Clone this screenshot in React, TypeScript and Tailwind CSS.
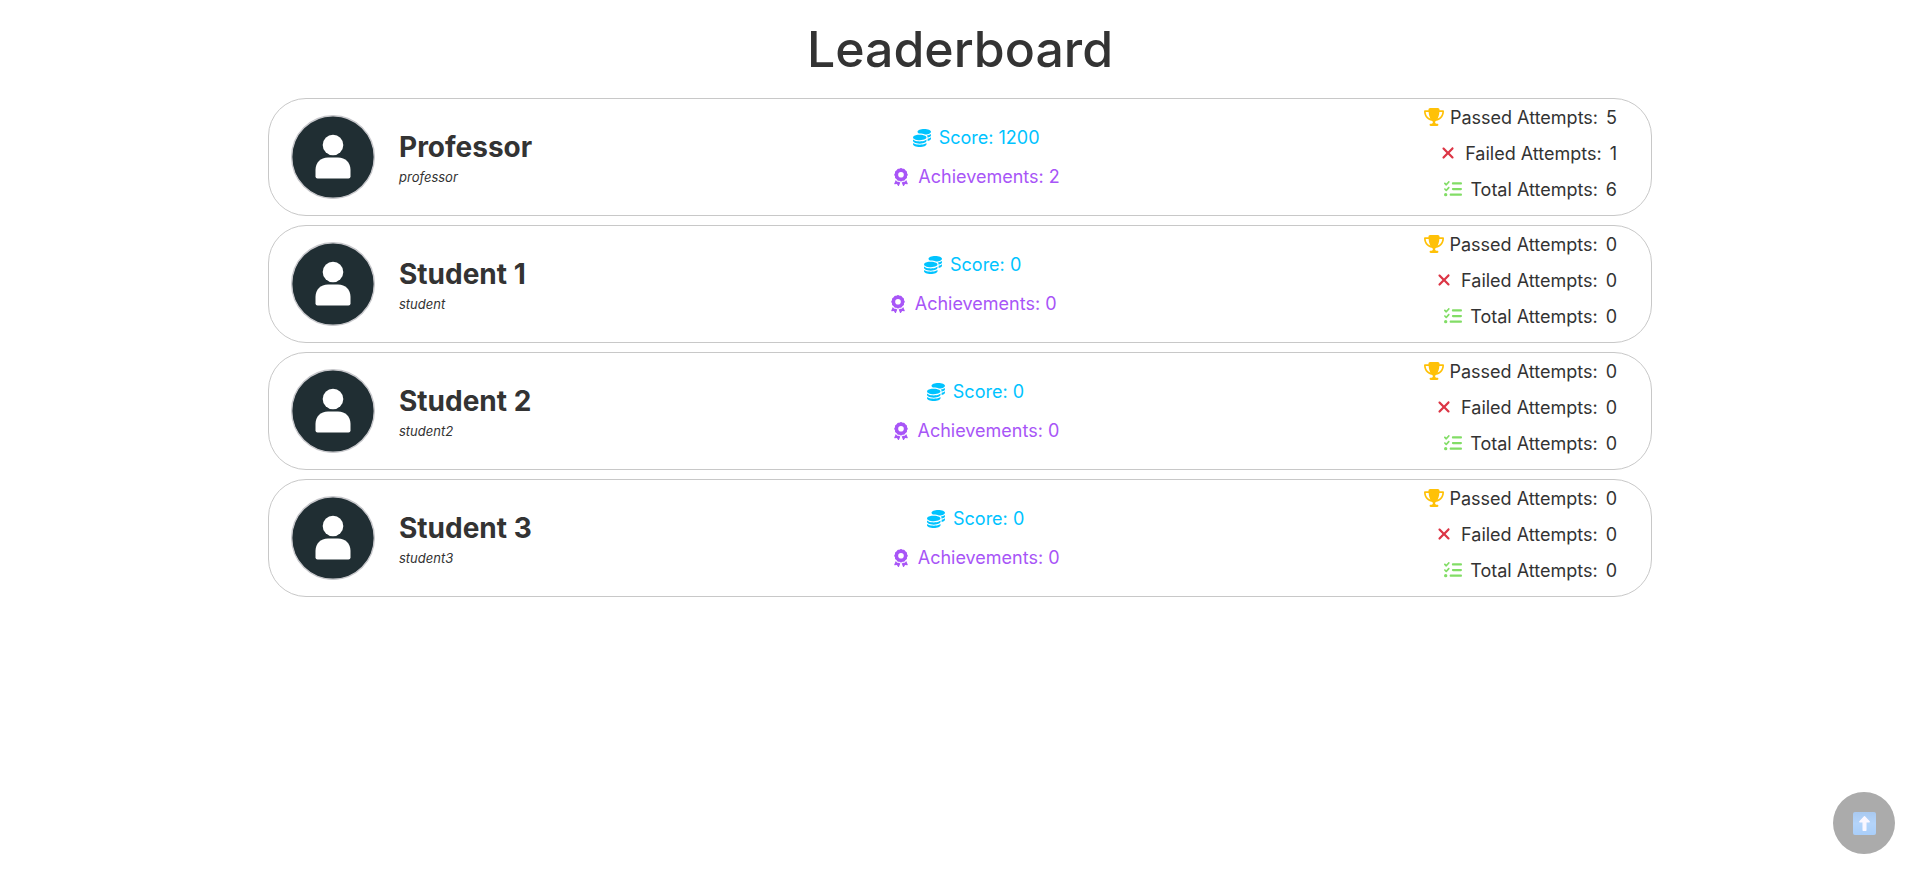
import { FaAward, FaCoins, FaListCheck, FaTrophy, FaXmark } from "react-icons/fa6";

type Player = {
  name: string;
  username: string;
  score: number;
  achievements: number;
  passed: number;
  failed: number;
  total: number;
};

const players: Player[] = [
  { name: "Professor", username: "professor", score: 1200, achievements: 2, passed: 5, failed: 1, total: 6 },
  { name: "Student 1", username: "student", score: 0, achievements: 0, passed: 0, failed: 0, total: 0 },
  { name: "Student 2", username: "student2", score: 0, achievements: 0, passed: 0, failed: 0, total: 0 },
  { name: "Student 3", username: "student3", score: 0, achievements: 0, passed: 0, failed: 0, total: 0 },
];

function Avatar() {
  return (
    <svg viewBox="0 0 84 84" className="size-21 shrink-0" aria-hidden="true">
      <circle cx="42" cy="42" r="41.3" fill="#202e33" stroke="#c8c8cc" strokeWidth="1.4" />
      <circle cx="42" cy="30" r="10.3" fill="#fff" />
      <path d="M24.500 55c0-7.500 5-12.500 12.500-12.500h10c7.500 0 12.500 5 12.500 12.500v6.500q0 2-2 2h-31q-2 0-2-2z" fill="#fff" />
    </svg>
  );
}

function PlayerCard({ player }: { player: Player }) {
  return (
    <li className="flex h-[118px] items-center justify-between rounded-[38px] border border-[#c8c8c8] pr-[34px] pl-[22px]">
      <div className="flex items-center gap-6">
        <Avatar />
        <div className="pt-0.5">
          <h2 className="text-[28px] leading-9 font-bold">{player.name}</h2>
          <p className="mt-0.5 text-[13px] leading-5 italic">{player.username}</p>
        </div>
      </div>
      <div className="flex flex-col items-center gap-3 pr-1 text-[18px] leading-[27px]">
        <p className="flex items-center gap-2 text-[#00c3ff]">
          <FaCoins className="text-[18px]" aria-hidden="true" />
          Score: {player.score}
        </p>
        <p className="flex items-center gap-2 text-[#a855f7]">
          <FaAward className="text-[18px]" aria-hidden="true" />
          Achievements: {player.achievements}
        </p>
      </div>
      <div className="flex flex-col items-end gap-[9px] pb-2 text-[18px] leading-[27px]">
        <p className="flex items-center gap-1.5">
          <FaTrophy className="text-[20px] text-[#ffc107]" aria-hidden="true" />
          <span className="flex gap-2">
            Passed Attempts: <span>{player.passed}</span>
          </span>
        </p>
        <p className="flex items-center gap-2">
          <FaXmark className="text-[18px] text-[#dc3545]" aria-hidden="true" />
          Failed Attempts: <span>{player.failed}</span>
        </p>
        <p className="flex items-center gap-2">
          <FaListCheck className="text-[18px] text-[#82dd66]" aria-hidden="true" />
          Total Attempts: <span>{player.total}</span>
        </p>
      </div>
    </li>
  );
}

export default function App() {
  return (
    <main className="min-h-screen bg-white px-4 pt-[19px] font-['Inter',sans-serif] text-[#333]">
      <h1 className="text-center text-[50px] leading-[60px] font-medium">Leaderboard</h1>
      <ul className="mx-auto mt-[19px] flex w-full max-w-[1384px] flex-col gap-[9px]">
        {players.map((player) => (
          <PlayerCard key={player.username} player={player} />
        ))}
      </ul>
      <button
        type="button"
        aria-label="Back to top"
        onClick={() => window.scrollTo({ top: 0, behavior: "smooth" })}
        className="fixed right-[25px] bottom-6 flex size-[62px] items-center justify-center rounded-full bg-[#ababab]"
      >
        <svg viewBox="0 0 23 23" className="size-[23px]" aria-hidden="true">
          <defs>
            <linearGradient id="tile" x1="0" y1="0" x2="0" y2="1">
              <stop offset="0" stopColor="#a9c9f0" />
              <stop offset="0.5" stopColor="#b4d4fa" />
              <stop offset="1" stopColor="#a9cefa" />
            </linearGradient>
          </defs>
          <rect width="23" height="23" rx="2" fill="url(#tile)" />
          <path d="M11.500 4.800L6.800 9.800H10.200V18.200H12.800V9.800H16.200Z" fill="#fbf7ff" stroke="#fbf7ff" strokeWidth="1.400" strokeLinejoin="round" />
        </svg>
      </button>
    </main>
  );
}
